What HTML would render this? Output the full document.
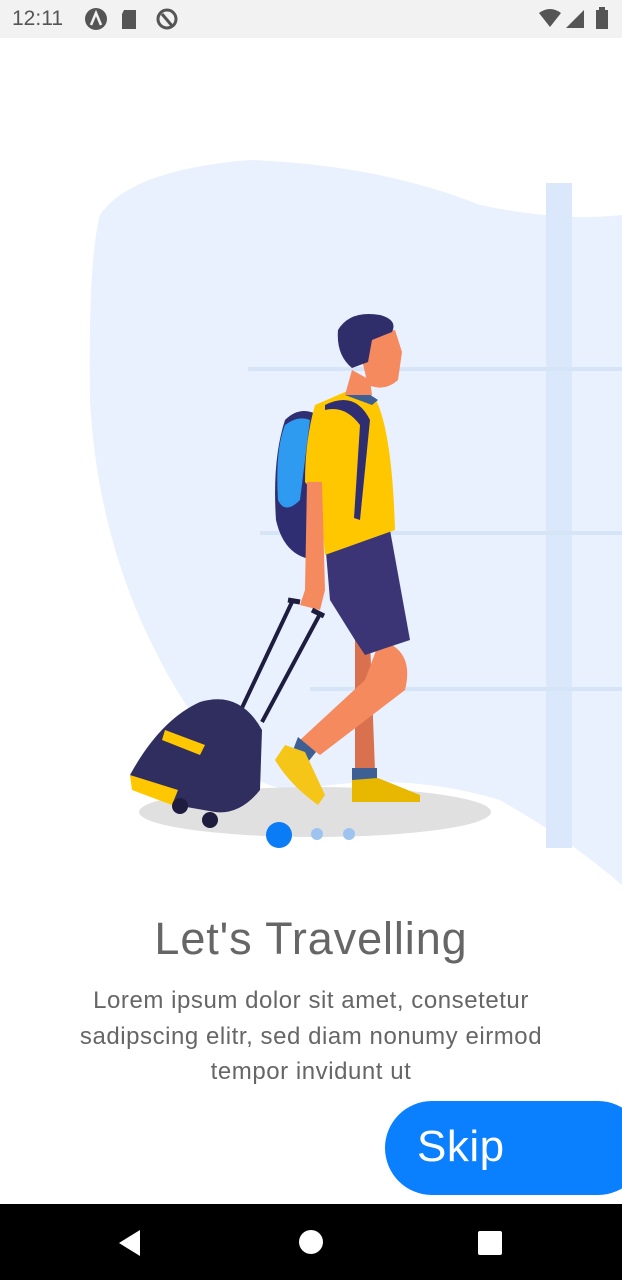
<!DOCTYPE html>
<html><head><meta charset="utf-8"><style>
*{margin:0;padding:0;box-sizing:border-box}
body{width:622px;height:1280px;position:relative;overflow:hidden;background:#fff;font-family:"Liberation Sans",sans-serif}
.sb{position:absolute;left:0;top:0;width:622px;height:38px;background:#f2f2f2}
.time{position:absolute;left:12px;top:7px;font-size:21px;color:#555}
.title{position:absolute;left:0;width:622px;top:913px;text-align:center;font-size:45px;color:#666;letter-spacing:0.9px}
.body{position:absolute;left:0;width:622px;top:983px;text-align:center;font-size:24px;letter-spacing:0.55px;line-height:35.5px;color:#666}
.skip{position:absolute;left:385px;top:1101px;width:260px;height:94px;border-radius:47px;background:#0a80ff;color:#fff;font-size:44px;padding-left:32px;line-height:92px;letter-spacing:0.5px}
.nav{position:absolute;left:0;top:1204px;width:622px;height:76px;background:#000}
</style></head><body>
<div class="sb"><div class="time">12:11</div>
<svg width="622" height="38" style="position:absolute;left:0;top:0">
<circle cx="96" cy="19" r="11" fill="#555"/><path d="M91 25 L96 13 L101 25" stroke="#f2f2f2" stroke-width="2.5" fill="none"/>
<path d="M124 10h12v19h-14v-15z" fill="#555"/>
<circle cx="167" cy="19" r="9" fill="none" stroke="#555" stroke-width="3"/><path d="M162 14 L173 27" stroke="#555" stroke-width="3"/>
<path d="M539 13 Q550 5 561 13 L550 27z" fill="#555"/>
<path d="M566 28 L584 10 V28z" fill="#555"/>
<rect x="596" y="10" width="12" height="19" fill="#555"/><rect x="599" y="7" width="6" height="4" fill="#555"/>
</svg></div>
<svg width="622" height="900" style="position:absolute;left:0;top:0">
<path d="M100 215 Q130 170 250 160 Q380 165 480 205 Q560 222 622 215 V885 Q570 840 500 800 Q400 770 300 790 Q250 790 210 740 Q100 590 90 400 Q88 260 100 215z" fill="#e8f1fd"/>
<rect x="546" y="183" width="26" height="665" fill="#dbe8fb"/>
<rect x="248" y="367" width="374" height="4" fill="#d6e4f8"/>
<rect x="260" y="531" width="362" height="4" fill="#d6e4f8"/>
<rect x="310" y="687" width="312" height="4" fill="#d6e4f8"/>
<ellipse cx="315" cy="812" rx="176" ry="25" fill="#e0e0e0"/>
<path d="M285 420 Q300 405 318 415 L320 560 Q285 560 276 520 Q272 460 285 420z" fill="#2f2e73"/>
<path d="M285 425 Q298 415 310 420 L300 500 Q285 515 278 500 Q275 450 285 425z" fill="#2f9bf0"/>
<path d="M355 640 L370 640 L375 770 L355 770z" fill="#d9714e"/>
<path d="M380 640 Q415 650 405 690 L320 755 L300 740 L365 680z" fill="#f48a5e"/>
<path d="M352 768h25v12h-25z" fill="#3e5f93"/>
<path d="M298 737 l18 15 -8 10 -15 -12z" fill="#3e5f93"/>
<path d="M352 780 L378 778 L420 795 L420 802 L352 802z" fill="#e8b800"/>
<path d="M285 745 L305 752 L325 795 L318 805 Q290 785 275 760z" fill="#f5c518"/>
<path d="M325 540 L390 530 L410 640 L365 655 L355 640 L330 600z" fill="#3b3576"/>
<path d="M315 405 L345 392 L375 398 Q392 430 395 530 L325 555 L320 500 L305 482 Q305 440 315 405z" fill="#ffc700"/>
<path d="M345 395 L360 388 L378 400 L372 405z" fill="#3e5f93"/>
<path d="M325 405 Q355 390 370 420 L360 520 L354 518 L360 425 Q345 405 325 410z" fill="#2f2e73"/>
<path d="M307 482 L322 482 L325 590 L320 610 L300 605 L305 590z" fill="#f48a5e"/>
<path d="M360 335 L395 330 L402 352 L398 380 Q385 392 368 385 L362 360z" fill="#f48a5e"/>
<path d="M345 395 L352 370 L370 380 L372 395z" fill="#f48a5e"/>
<path d="M338 330 Q350 310 380 315 Q398 320 392 332 L372 340 L368 362 L352 368 Q336 355 338 330z" fill="#2f2e6b"/>
<path d="M292 602 L240 712 M320 614 L262 722" stroke="#1f1d3f" stroke-width="4"/>
<path d="M288 600 L300 602 M312 610 L324 616" stroke="#1f1d3f" stroke-width="5"/>
<path d="M130 775 Q160 720 200 702 Q240 690 262 730 L260 790 Q240 815 215 812 L175 805 L135 790z" fill="#2f2e5f"/>
<path d="M130 775 L178 790 L172 805 L132 790z" fill="#ffc700"/>
<path d="M165 730 L205 745 L200 755 L162 740z" fill="#ffc700"/>
<circle cx="180" cy="806" r="8" fill="#1f1d3f"/><circle cx="210" cy="820" r="8" fill="#1f1d3f"/>
<circle cx="279" cy="835" r="13" fill="#0a7cf5"/>
<circle cx="317" cy="834" r="6" fill="#9dc4ef"/><circle cx="349" cy="834" r="6" fill="#9dc4ef"/>
</svg>
<div class="title">Let's Travelling</div>
<div class="body">Lorem ipsum dolor sit amet, consetetur<br>sadipscing elitr, sed diam nonumy eirmod<br>tempor invidunt ut</div>
<div class="skip">Skip</div>
<div class="nav"><svg width="622" height="76">
<path d="M140 26 L140 52 L119 39z" fill="#fff"/>
<circle cx="311" cy="38" r="12" fill="#fff"/>
<rect x="478" y="27" width="24" height="24" rx="2" fill="#fff"/>
</svg></div>
</body></html>
